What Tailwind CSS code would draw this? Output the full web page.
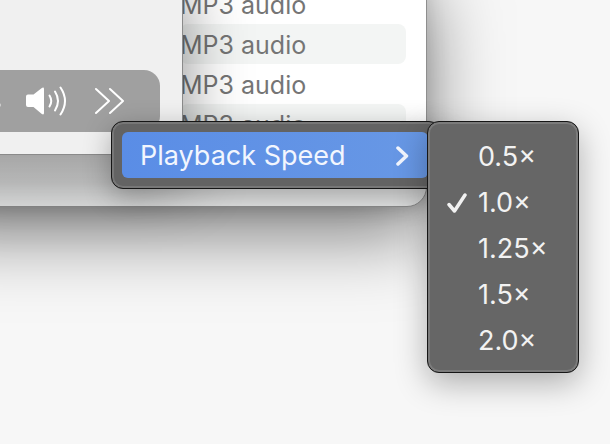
<!DOCTYPE html>
<html lang="en">
<head>
    <meta charset="UTF-8">
    <meta name="viewport" content="width=device-width, initial-scale=1.0">
    <title>Playback Speed</title>
    <script src="https://cdn.jsdelivr.net/npm/@tailwindcss/browser@4"></script>
</head>
<body class="relative min-h-screen overflow-hidden bg-[#f7f7f7] font-[Inter,sans-serif]">
    <!-- Finder window -->
    <section class="absolute -left-20 -top-9 w-[507px] pb-[22px] rounded-[20px] bg-white bg-linear-to-b from-white from-80% to-[#e6e7e7] to-90% border border-[#8e8e8e] shadow-[0_26px_76px_rgba(0,0,0,0.5),0_0_24px_rgba(0,0,0,0.12)]">
        <ul class="pl-[259px] pr-5 pt-[19px] text-[25px] text-[#757575]">
            <li class="h-10 pt-[3px] flex items-center">MP3 audio</li>
            <li class="h-10 pt-[3px] flex items-center rounded-lg bg-[#f3f5f4]">MP3 audio</li>
            <li class="h-10 pt-[3px] flex items-center">MP3 audio</li>
            <li class="h-10 pt-[3px] flex items-center rounded-lg bg-[#f3f5f4]">MP3 audio</li>
            <li class="h-10"></li>
        </ul>
    </section>

    <!-- Player window -->
    <section class="absolute -left-20 -top-9 w-[263px] h-[191px] flex items-end pb-[22px] pr-[22px] bg-[#f0f0f0] border border-[#8a8a8a] shadow-[0_24px_60px_rgba(0,0,0,0.45)]">
        <div class="w-full h-[62px] flex items-center justify-end gap-[27px] pr-9 rounded-2xl bg-[#a0a0a0] text-white">
            <span class="size-1 mr-[-3px] mt-2 rounded-full bg-white/50"></span>
            <button type="button" aria-label="Volume">
                <svg class="w-[42px] h-8" viewBox="0 0 42 32" fill="none" stroke="currentColor" stroke-width="2" stroke-linecap="round">
                    <path d="M3 9.500h5.500L16.500 3.200Q19 1.500 19 4V28Q19 30.500 16.500 28.800L8.500 22H3Q1 22 1 20V11.500Q1 9.500 3 9.500Z" fill="currentColor" stroke="none"/>
                    <path d="M24.500 10.500Q28 16 24.500 21.500"/>
                    <path d="M30 6.500Q36 16 30 25.500"/>
                    <path d="M35.500 2.500Q44.500 16 35.500 29.500"/>
                </svg>
            </button>
            <button type="button" aria-label="More">
                <svg class="w-[30px] h-7" viewBox="0 0 30 28" fill="none" stroke="currentColor" stroke-width="2" stroke-linecap="round" stroke-linejoin="round">
                    <path d="M2 2l13 12L2 26M16 2l13 12-13 12"/>
                </svg>
            </button>
        </div>
    </section>

    <!-- Menu -->
    <div role="menu" class="absolute left-[111px] top-[121px] w-[330px] h-[68px] rounded-xl border border-[#161616] bg-[#636363] shadow-[0_8px_28px_rgba(0,0,0,0.3),inset_0_0_0_2px_#777]">
        <button type="button" role="menuitem" aria-haspopup="menu" class="mt-2.5 ml-2.5 w-[306px] h-[46px] pt-[3px] flex items-center justify-between pl-[18px] pr-[18px] rounded-md bg-linear-to-r from-[#5a8de6] to-[#6898e5] text-[27px] text-[#f2f6fe]">
            Playback Speed
            <svg class="w-3.5 h-[22px]" viewBox="0 0 14 22" fill="none" stroke="currentColor" stroke-width="3.500" stroke-linecap="round" stroke-linejoin="round">
                <path d="M2 2L10.500 10l-8.500 8"/>
            </svg>
        </button>
    </div>

    <!-- Submenu -->
    <div role="menu" aria-label="Playback Speed" class="absolute left-[427px] top-[121px] w-[152px] pt-[11px] pb-[9px] flex flex-col rounded-xl border border-[#161616] bg-[#666] text-[27px] text-[#f2f2f2] shadow-[0_10px_32px_rgba(0,0,0,0.3),inset_0_0_0_2px_#7b7b7b]">
        <button type="button" role="menuitemradio" aria-checked="false" class="h-[46px] pt-[3px] pl-[50px] text-left">0.5×</button>
        <button type="button" role="menuitemradio" aria-checked="true" class="h-[46px] pt-[3px] pl-[18px] flex items-center gap-2.5 text-left">
            <svg class="w-[22px] h-[22px]" viewBox="0 0 22 22" fill="none" stroke="currentColor" stroke-width="3.500" stroke-linecap="round" stroke-linejoin="round">
                <path d="M3 11.500L8.500 18 19 2"/>
            </svg>
            1.0×
        </button>
        <button type="button" role="menuitemradio" aria-checked="false" class="h-[46px] pt-[3px] pl-[50px] text-left">1.25×</button>
        <button type="button" role="menuitemradio" aria-checked="false" class="h-[46px] pt-[3px] pl-[50px] text-left">1.5×</button>
        <button type="button" role="menuitemradio" aria-checked="false" class="h-[46px] pt-[3px] pl-[50px] text-left">2.0×</button>
    </div>
</body>
</html>
